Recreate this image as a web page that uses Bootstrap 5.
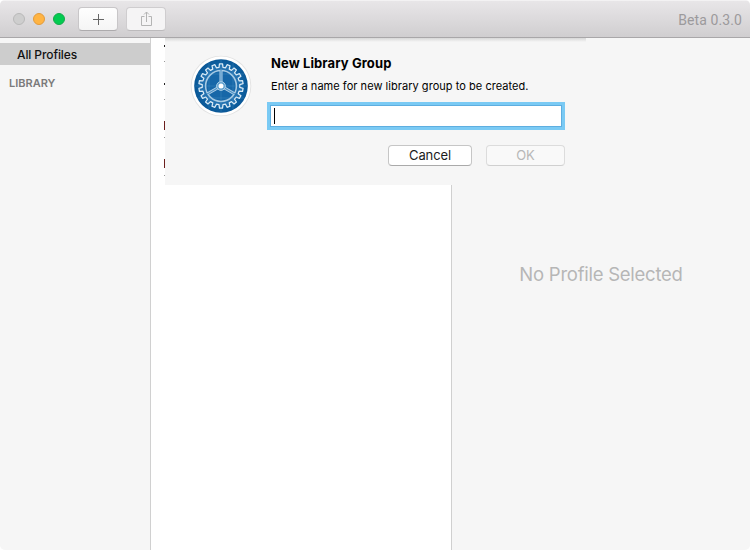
<!DOCTYPE html>
<html lang="en">
<head>
<meta charset="utf-8">
<title>Profiles</title>
<link href="https://cdn.jsdelivr.net/npm/bootstrap@5.3.0/dist/css/bootstrap.min.css" rel="stylesheet">
<style>
body{background:#fff;font-family:Inter,"Liberation Sans",sans-serif;font-size:12px;line-height:1.2;color:#000}
.app-window{width:750px;height:550px;background:#f6f6f6;border-radius:5px}
.titlebar{height:38px;padding:0 8px 0 13px;background:linear-gradient(#e8e6e8,#d0ced0);border-bottom:1px solid #a9a7a9;border-top:1px solid #f3f2f3}
.light{width:12px;height:12px;border-radius:50%;border:1px solid #b9b9b9;background:#cecece}
.light-min{background:#ffb443;border-color:#e29b3c}
.light-max{background:#02cb50;border-color:#14a94a}
.tool{height:24px;width:40px;padding:0;border-radius:4px;border:1px solid #c8c6c8;border-bottom-color:#adabad;background:linear-gradient(#fefefe,#f5f5f5)}
.tool-add{margin-left:13px}
.tool-share{background:#f5f4f5;border-color:#cfcdcf;border-bottom-color:#bcbabc}
.version{font-family:Roboto,sans-serif;font-size:14px;color:#9c9a9c;letter-spacing:.1px;padding-top:2px}
.sidebar{width:151px;border-right:1px solid #d0d0d0;padding-top:5px}
.side-item{height:22px;padding:2px 0 0 17px;background:#cdcdcd;font-weight:500;color:#111;letter-spacing:-.1px}
.side-head{padding:12px 0 0 9px;font-size:11px;font-weight:600;color:#7b7b7b}
.profiles{width:301px;background:#fff;border-right:1px solid #d0d0d0;padding:7px 0 0 12.5px}
.peek{height:38px;width:2px}
.peek i{display:block;height:2px;background:#222}
.peek i+i{height:1px;margin-top:14px;background:#999}
.peek.red i:first-child{height:9px;background:#6b1f1d}
.peek.red i+i{margin-top:7px}
.empty{font-size:18.5px;color:#b6b6b6;padding-bottom:39px;letter-spacing:-.25px}
.sheet{left:165px;top:38px;width:421px;height:147px;background:#f6f6f6;padding:16px 24px 0 24px;overflow:hidden}
.sheet::before{content:"";position:absolute;left:0;top:0;width:100%;height:4px;background:linear-gradient(#d8d8d8,#f6f6f6)}
.sheet-form{width:292px}
.sheet-title{margin-left:-1px;padding-left:2px;font-size:13px;font-weight:700;line-height:18px;letter-spacing:.1px}
.sheet-note{margin:7px 0 0 1px;font-size:11px;line-height:15px;letter-spacing:.04px}
.field{margin-top:11px;height:22px;background:#fff;border:1px solid #5eaee0;box-shadow:0 0 0 3px #7acaf4}
.caret{width:1px;height:16px;background:#000;margin-left:3px}
.choices{margin:18px -3px 0 0;gap:14px}
.choice{width:84px;height:21px;padding:0;border-radius:4px;font-size:13px;line-height:19px;background:#fff;border:1px solid #c6c6c6;border-bottom-color:#aaa;color:#1b1b1b;letter-spacing:-.1px}
.choice-off{width:79px;background:#f9f9f9;border-color:#dcdcdc;border-bottom-color:#d0d0d0;color:#b7b7b7}
</style>
</head>
<body class="overflow-hidden">
<div class="app-window position-relative overflow-hidden d-flex flex-column">
  <header class="titlebar d-flex align-items-center flex-shrink-0">
    <div class="d-flex gap-2"><span class="light"></span><span class="light light-min"></span><span class="light light-max"></span></div>
    <button class="btn tool tool-add d-flex align-items-center justify-content-center" aria-label="Add"><svg width="12" height="12" viewBox="0 0 12 12"><path d="M6.5 1v11M1 6.5h11" stroke="#666" fill="none"/></svg></button>
    <button class="btn tool tool-share d-flex align-items-center justify-content-center ms-2" aria-label="Share"><svg width="12" height="16" viewBox="0 0 12 16"><path d="M4.5 5.5h-3v9h10v-9h-3M6.5 11V1M4 3.5l2.5-2.5L9 3.5" stroke="#b4b4b4" fill="none"/></svg></button>
    <span class="version ms-auto">Beta 0.3.0</span>
  </header>
  <main class="d-flex flex-grow-1">
    <aside class="sidebar">
      <div class="side-item d-flex align-items-center">All Profiles</div>
      <div class="side-head">LIBRARY</div>
    </aside>
    <section class="profiles">
      <div class="peek"><i></i><i></i></div>
      <div class="peek"><i></i><i></i></div>
      <div class="peek red"><i></i><i></i></div>
      <div class="peek red"><i></i><i></i></div>
    </section>
    <section class="empty flex-grow-1 d-flex align-items-center justify-content-center">No Profile Selected</section>
  </main>
  <div class="sheet position-absolute d-flex" role="dialog">
    <svg class="flex-shrink-0" width="64" height="64" viewBox="-32 -32 64 64">
      <defs><radialGradient id="disc"><stop offset="0" stop-color="#2d88c6"/><stop offset=".65" stop-color="#1268aa"/><stop offset="1" stop-color="#0a5796"/></radialGradient></defs>
      <circle r="30.3" fill="#e2e2e2"/><circle r="29.4" fill="#fff"/><circle r="26.8" fill="url(#disc)"/>
      <path id="gear" fill="#2472b0" stroke="#dcebf6" stroke-width="1.25" stroke-linejoin="round"/>
      <circle r="15.4" fill="#1767a8" stroke="#a9cbe4" stroke-width="1.5"/>
      <g stroke="#b3d1e8" stroke-width="3"><path d="M0-3V-15.6M2.6 1.5L13.5 7.8M-2.6 1.5L-13.5 7.8"/></g>
      <g stroke="#4f92c5" stroke-width="1.2"><path d="M0-3V-16M2.6 1.5L13.8 8M-2.6 1.5L-13.8 8"/></g>
      <path d="M-26 0H26M0-26V26M-23-12H23M-23 12H23M-12-23V23M12-23V23" stroke="#7ab8e2" stroke-width=".5" opacity=".4"/>
      <circle r="4.4" fill="#5d9fce" stroke="#a9cde6"/><circle r="2.5" fill="#fff"/>
    </svg>
    <div class="sheet-form ms-auto">
      <div class="sheet-title">New Library Group</div>
      <div class="sheet-note">Enter a name for new library group to be created.</div>
      <div class="field d-flex align-items-center"><span class="caret"></span></div>
      <div class="choices d-flex justify-content-end">
        <button class="btn choice">Cancel</button>
        <button class="btn choice choice-off">OK</button>
      </div>
    </div>
  </div>
</div>
<script>
// 18-tooth gear outline
let pts=[];
for(let i=0;i<18;i++)for(const [o,r] of [[-6,18.8],[-4,22.2],[4,22.2],[6,18.8]]){
  const a=(i*20+o)*Math.PI/180;pts.push((r*Math.sin(a)).toFixed(2)+" "+(-r*Math.cos(a)).toFixed(2));
}
document.getElementById("gear").setAttribute("d","M"+pts.join("L")+"Z");
</script>
<script src="https://cdn.jsdelivr.net/npm/bootstrap@5.3.0/dist/js/bootstrap.bundle.min.js"></script>
</body>
</html>
